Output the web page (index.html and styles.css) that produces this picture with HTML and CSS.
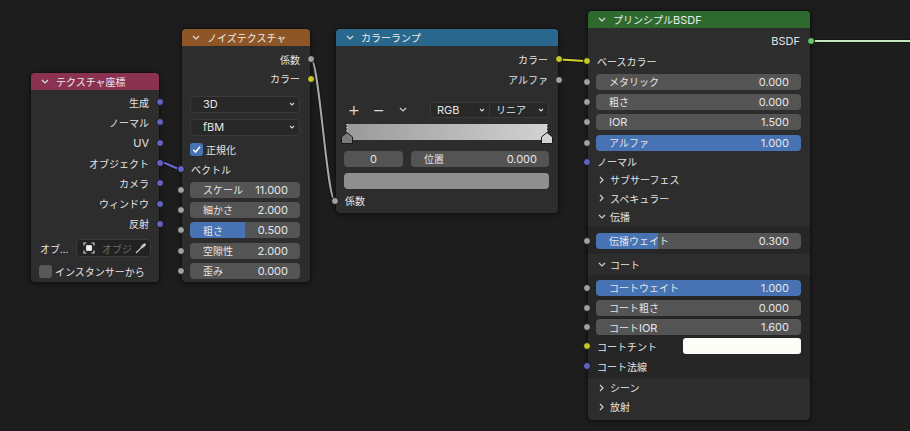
FILE: index.html
```html
<!DOCTYPE html>
<html lang="ja">
<head>
  <meta charset="UTF-8" />
  <title>シェーダーエディター</title>
  <link rel="stylesheet" href="styles.css">
</head>
<body>
  <div class="canvas">
    <!-- ワイヤー（ノードの下に描く） -->
    <svg class="wires" width="910" height="431" viewBox="0 0 910 431">
      <g class="wire-outline">
        <path d="M160 162 C167 162 174 169 181 169" />
        <path d="M311 59 C319 59 327 201 335 201" />
        <path d="M558 59.5 C570 59.5 575 61 587 61" />
        <path d="M811 41 L910 41" />
      </g>
      <path class="wire w-vector" d="M160 162 C167 162 174 169 181 169" />
      <path class="wire w-float" d="M311 59 C319 59 327 201 335 201" />
      <path class="wire w-color" d="M558 59.5 C570 59.5 575 61 587 61" />
      <path class="wire w-shader" d="M811 41 L910 41" />
    </svg>

    <!-- テクスチャ座標 -->
    <div class="node node-texcoord">
      <div class="node-header header-input">
        <svg class="chev" viewBox="0 0 8 5"><path d="M1 1 L4 4 L7 1" /></svg>
        テクスチャ座標
      </div>
      <div class="node-body">
        <div class="row out">生成<span class="socket vector"></span></div>
        <div class="row out">ノーマル<span class="socket vector"></span></div>
        <div class="row out"><span class="lat">UV</span><span class="socket vector"></span></div>
        <div class="row out">オブジェクト<span class="socket vector"></span></div>
        <div class="row out">カメラ<span class="socket vector"></span></div>
        <div class="row out">ウィンドウ<span class="socket vector"></span></div>
        <div class="row out">反射<span class="socket vector"></span></div>
        <div class="row obj-row">
          <span class="obj-label">オブ...</span>
          <div class="obj-field">
            <svg class="obj-icon" viewBox="0 0 12 12">
              <path d="M1 3.5 V1 H3.5 M8.5 1 H11 V3.5 M11 8.5 V11 H8.5 M3.5 11 H1 V8.5" />
              <rect x="3.5" y="3.5" width="5" height="5" rx="0.5" />
            </svg>
            <span class="placeholder">オブジ</span>
            <svg class="pipette" viewBox="0 0 12 12">
              <path d="M7.2 2.6 L9.4 0.8 Q10.8 -0.2 11.6 0.8 Q12.4 1.8 11.2 3 L9.4 4.8 Z" />
              <path class="pipe-line" d="M7.6 4.4 L2.2 9.8 L1.2 11 M6.4 3.2 L8.8 5.6" />
            </svg>
          </div>
        </div>
        <div class="row check-row">
          <span class="checkbox"></span>インスタンサーから
        </div>
      </div>
    </div>

    <!-- ノイズテクスチャ -->
    <div class="node node-noise">
      <div class="node-header header-texture">
        <svg class="chev" viewBox="0 0 8 5"><path d="M1 1 L4 4 L7 1" /></svg>
        ノイズテクスチャ
      </div>
      <div class="node-body">
        <div class="row out first">係数<span class="socket float"></span></div>
        <div class="row out second">カラー<span class="socket color"></span></div>
        <div class="select sel-a"><span class="lat">3D</span><svg class="mini-chev" viewBox="0 0 6 4"><path d="M1 1 L3 3 L5 1" /></svg></div>
        <div class="select sel-b"><span class="lat">fBM</span><svg class="mini-chev" viewBox="0 0 6 4"><path d="M1 1 L3 3 L5 1" /></svg></div>
        <div class="row check-row checked-row">
          <span class="checkbox checked"><svg viewBox="0 0 12 12"><path d="M2.5 6.2 L5 8.8 L9.8 3" /></svg></span>正規化
        </div>
        <div class="row in">ベクトル<span class="socket vector"></span></div>
        <div class="fields">
          <div class="row in field-row"><span class="socket float"></span><div class="field"><span>スケール</span><span class="num">11.000</span></div></div>
          <div class="row in field-row"><span class="socket float"></span><div class="field"><span>細かさ</span><span class="num">2.000</span></div></div>
          <div class="row in field-row"><span class="socket float"></span><div class="field factor" style="--fill: 50%"><span>粗さ</span><span class="num">0.500</span></div></div>
          <div class="row in field-row"><span class="socket float"></span><div class="field"><span>空隙性</span><span class="num">2.000</span></div></div>
          <div class="row in field-row"><span class="socket float"></span><div class="field"><span>歪み</span><span class="num">0.000</span></div></div>
        </div>
      </div>
    </div>

    <!-- カラーランプ -->
    <div class="node node-ramp">
      <div class="node-header header-converter">
        <svg class="chev" viewBox="0 0 8 5"><path d="M1 1 L4 4 L7 1" /></svg>
        カラーランプ
      </div>
      <div class="node-body">
        <div class="row out first">カラー<span class="socket color"></span></div>
        <div class="row out alpha">アルファ<span class="socket float"></span></div>
        <div class="ramp-tools">
          <span class="tool">+</span>
          <span class="tool">−</span>
          <svg class="tool-chev" viewBox="0 0 8 5"><path d="M1 1 L4 4 L7 1" /></svg>
          <div class="seg">
            <div class="seg-item"><span class="lat">RGB</span><svg class="mini-chev" viewBox="0 0 6 4"><path d="M1 1 L3 3 L5 1" /></svg></div>
            <div class="seg-item">リニア<svg class="mini-chev" viewBox="0 0 6 4"><path d="M1 1 L3 3 L5 1" /></svg></div>
          </div>
        </div>
        <div class="ramp">
          <div class="ramp-bar"></div>
          <svg class="stop stop-left" viewBox="0 0 12 20">
            <path class="stop-dash" d="M6 0 V8" />
            <path class="stop-body" d="M0.5 13 L6 8.5 L11.5 13 V19.5 H0.5 Z" />
          </svg>
          <svg class="stop stop-right" viewBox="0 0 12 20">
            <path class="stop-dash" d="M6 0 V8" />
            <path class="stop-body" d="M0.5 13 L6 8.5 L11.5 13 V19.5 H0.5 Z" />
          </svg>
        </div>
        <div class="ramp-values">
          <div class="field index"><span class="num">0</span></div>
          <div class="field pos"><span>位置</span><span class="num">0.000</span></div>
        </div>
        <div class="swatch-bar"></div>
        <div class="row in last">係数<span class="socket float"></span></div>
      </div>
    </div>

    <!-- プリンシプルBSDF -->
    <div class="node node-bsdf">
      <div class="node-header header-shader">
        <svg class="chev" viewBox="0 0 8 5"><path d="M1 1 L4 4 L7 1" /></svg>
        プリンシプル<span class="lat">BSDF</span>
      </div>
      <div class="node-body">
        <div class="row out first"><span class="lat">BSDF</span><span class="socket shader"></span></div>
        <div class="row in">ベースカラー<span class="socket color"></span></div>
        <div class="fields">
          <div class="row in field-row"><span class="socket float"></span><div class="field"><span>メタリック</span><span class="num">0.000</span></div></div>
          <div class="row in field-row"><span class="socket float"></span><div class="field"><span>粗さ</span><span class="num">0.000</span></div></div>
          <div class="row in field-row"><span class="socket float"></span><div class="field"><span class="lat">IOR</span><span class="num">1.500</span></div></div>
          <div class="row in field-row"><span class="socket float"></span><div class="field factor" style="--fill: 100%"><span>アルファ</span><span class="num">1.000</span></div></div>
        </div>
        <div class="row in normal">ノーマル<span class="socket vector"></span></div>
        <div class="panel-head"><svg class="pchev" viewBox="0 0 5 8"><path d="M1 1 L4 4 L1 7" /></svg>サブサーフェス</div>
        <div class="panel-head"><svg class="pchev" viewBox="0 0 5 8"><path d="M1 1 L4 4 L1 7" /></svg>スペキュラー</div>
        <div class="panel-head"><svg class="pchev open" viewBox="0 0 8 5"><path d="M1 1 L4 4 L7 1" /></svg>伝播</div>
        <div class="panel-content transmission">
          <div class="row in field-row"><span class="socket float"></span><div class="field factor" style="--fill: 30%"><span>伝播ウェイト</span><span class="num">0.300</span></div></div>
        </div>
        <div class="panel-head coat-head"><svg class="pchev open" viewBox="0 0 8 5"><path d="M1 1 L4 4 L7 1" /></svg>コート</div>
        <div class="panel-content coat">
          <div class="row in field-row coat-field"><span class="socket float"></span><div class="field factor" style="--fill: 100%"><span>コートウェイト</span><span class="num">1.000</span></div></div>
          <div class="row in field-row coat-field"><span class="socket float"></span><div class="field"><span>コート粗さ</span><span class="num">0.000</span></div></div>
          <div class="row in field-row coat-field"><span class="socket float"></span><div class="field"><span>コート<span class="lat">IOR</span></span><span class="num">1.600</span></div></div>
          <div class="row in tint">コートチント<span class="socket color"></span><div class="tint-swatch"></div></div>
          <div class="row in coat-normal">コート法線<span class="socket vector"></span></div>
        </div>
        <div class="panel-head closed-a"><svg class="pchev" viewBox="0 0 5 8"><path d="M1 1 L4 4 L1 7" /></svg>シーン</div>
        <div class="panel-head closed-b"><svg class="pchev" viewBox="0 0 5 8"><path d="M1 1 L4 4 L1 7" /></svg>放射</div>
      </div>
    </div>
  </div>
</body>
</html>
```

FILE: styles.css
```css
/* ベース */
* {
  margin: 0;
  padding: 0;
  box-sizing: border-box;
}
html, body {
  width: 910px;
  height: 431px;
  overflow: hidden;
  background: #1d1d1d;
}
body {
  font-family: 'Noto Sans CJK JP', 'DejaVu Sans', sans-serif;
  font-size: 10px;
  color: #e4e4e4;
}
.lat, .num {
  font-family: 'Inter', 'DejaVu Sans', sans-serif;
  font-size: 11px;
}
.canvas {
  position: relative;
  width: 910px;
  height: 431px;
  background: #1d1d1d;
}

/* ワイヤー */
.wires {
  position: absolute;
  left: 0;
  top: 0;
  z-index: 0;
}
.wire-outline path {
  fill: none;
  stroke: #141414;
  stroke-width: 4;
}
.wire {
  fill: none;
  stroke-width: 2;
}
.w-vector { stroke: #6a6ad0; }
.w-float { stroke: #a8a8a8; }
.w-color { stroke: #d2d22e; }
.w-shader { stroke: #c2e8c2; }

/* ノード共通 */
.node {
  position: absolute;
  z-index: 1;
  background: #2d2d2d;
  border: 1px solid #121212;
  border-radius: 5px;
  box-shadow: 0 1px 5px rgba(0, 0, 0, 0.45);
}
.node-texcoord { left: 30px; top: 72px; width: 130px; }
.node-noise { left: 181px; top: 28px; width: 130px; }
.node-ramp { left: 335px; top: 28px; width: 224px; }
.node-bsdf { left: 587px; top: 10px; width: 224px; }

.node-header {
  height: 17px;
  display: flex;
  align-items: center;
  padding-left: 10px;
  border-radius: 4px 4px 0 0;
  color: #ececec;
}
.header-input { background: #8c3251; }
.header-texture { background: #8e5627; }
.header-converter { background: #29688c; }
.header-shader { background: #2e6a2e; }
.chev {
  width: 8px;
  height: 5px;
  margin-right: 7px;
  fill: none;
  stroke: #dedede;
  stroke-width: 1.2;
}

.node-body {
  display: flex;
  flex-direction: column;
}
.row {
  position: relative;
  height: 20px;
  display: flex;
  align-items: center;
  padding: 0 9px;
  white-space: nowrap;
}
.row.out {
  justify-content: flex-end;
  padding-right: 10px;
}

/* ソケット */
.socket {
  position: absolute;
  top: 50%;
  width: 8px;
  height: 8px;
  margin-top: -4px;
  border-radius: 50%;
  border: 1px solid #161616;
  z-index: 2;
}
.out .socket { right: -5px; }
.in .socket { left: -5px; }
.socket.vector { background: #6363c7; }
.socket.float { background: #a1a1a1; }
.socket.color { background: #c7c729; }
.socket.shader { background: #63c763; }

/* 数値フィールド */
.field-row {
  padding: 0 9px 0 8px;
}
.field {
  flex: 1;
  height: 16px;
  display: flex;
  align-items: center;
  justify-content: space-between;
  padding: 0 12px 0 13px;
  background: #545454;
  border-radius: 4px;
  color: #e6e6e6;
}
.field.factor {
  background: linear-gradient(90deg, #4772b3 var(--fill), #545454 var(--fill));
}

/* テクスチャ座標 */
.node-texcoord .node-body { padding: 2px 0 1px; }
.node-texcoord .out { height: 20.3px; }
.obj-row {
  margin-top: 4px;
  padding: 0 8px 0 9px;
}
.obj-label { width: 36px; }
.obj-field {
  flex: 1;
  height: 18px;
  display: flex;
  align-items: center;
  padding: 0 4px 0 6px;
  background: #222222;
  border: 1px solid #3b3b3b;
  border-radius: 4px;
}
.obj-icon {
  width: 12px;
  height: 12px;
  fill: #f2f2f2;
  stroke: #cfcfcf;
  stroke-width: 1.2;
}
.obj-icon path { fill: none; }
.placeholder {
  margin-left: 7px;
  color: #6e6e6e;
  flex: 1;
}
.pipette {
  width: 11px;
  height: 11px;
  fill: #cfcfcf;
}
.pipe-line {
  fill: none;
  stroke: #cfcfcf;
  stroke-width: 1.3;
}
.check-row {
  margin-top: 3px;
  padding-left: 8px;
}
.checkbox {
  width: 13px;
  height: 13px;
  margin-right: 3px;
  border-radius: 3px;
  background: #595959;
  display: flex;
  align-items: center;
  justify-content: center;
}
.checkbox.checked { background: #4772b3; }
.checkbox svg {
  width: 11px;
  height: 11px;
  fill: none;
  stroke: #fff;
  stroke-width: 1.7;
}

/* ノイズテクスチャ */
.node-noise .node-body { padding: 3px 0 1px; }
.row.second { height: 19px; }
.select {
  height: 17.5px;
  margin: 0 10px 0 8px;
  display: flex;
  align-items: center;
  justify-content: space-between;
  padding: 0 4px 0 12px;
  background: #282828;
  border: 1px solid #3a3a3a;
  border-radius: 4px;
}
.sel-a { margin-top: 7.5px; }
.sel-b { margin-top: 5.5px; }
.mini-chev {
  width: 6px;
  height: 4px;
  fill: none;
  stroke: #d6d6d6;
  stroke-width: 1.1;
}
.checked-row { padding-left: 8px; }
.node-noise .fields { margin-top: 0.5px; }
.node-noise .field-row { height: 20.3px; padding-right: 10px; }

/* カラーランプ */
.node-ramp .node-body { padding: 3px 0 2px; }
.row.alpha { height: 21px; }
.ramp-tools {
  height: 16.5px;
  margin-top: 11.5px;
  display: flex;
  align-items: center;
  padding: 0 9px 0 12px;
}
.tool {
  font-family: 'DejaVu Sans', sans-serif;
  font-size: 14px;
  width: 25px;
  color: #dcdcdc;
}
.tool-chev {
  width: 8px;
  height: 5px;
  margin-left: 1px;
  fill: none;
  stroke: #cfcfcf;
  stroke-width: 1.2;
}
.seg {
  margin-left: auto;
  width: 119px;
  height: 16.5px;
  display: flex;
  background: #282828;
  border: 1px solid #3a3a3a;
  border-radius: 4px;
}
.seg-item {
  flex: 1;
  display: flex;
  align-items: center;
  justify-content: space-between;
  padding: 0 4px 0 6px;
}
.seg-item + .seg-item { border-left: 1px solid #3a3a3a; }
.ramp {
  position: relative;
  height: 20px;
  margin: 6px 11px 0 11px;
}
.ramp-bar {
  height: 16px;
  background: linear-gradient(90deg, #9a9a9a, #d2d2d2);
}
.stop {
  position: absolute;
  top: 0;
  width: 12px;
  height: 20px;
}
.stop-left { left: -6px; }
.stop-right { right: -6px; }
.stop-dash {
  stroke: #f0f0f0;
  stroke-width: 1;
  stroke-dasharray: 1.5 1.5;
}
.stop-body { stroke: #1a1a1a; stroke-width: 1; }
.stop-left .stop-body { fill: #7a7a7a; }
.stop-right .stop-body { fill: #d4d4d4; }
.ramp-values {
  height: 16.7px;
  margin: 6.5px 9px 0 8px;
  display: flex;
  gap: 8px;
}
.ramp-values .field { height: 16.7px; }
.field.index {
  flex: 0 0 59px;
  justify-content: center;
  padding: 0;
}
.swatch-bar {
  height: 16px;
  margin: 5.8px 9px 0 8px;
  background: #8f8f8f;
  border-radius: 4px;
}
.row.last { margin-top: 2px; }

/* プリンシプルBSDF */
.node-bsdf .node-body { padding: 3px 0 4px; }
.node-bsdf .fields { margin-top: 0.5px; }
.node-bsdf .fields .field-row { height: 20.3px; }
.row.normal { height: 18px; }
.panel-head {
  height: 18.5px;
  display: flex;
  align-items: center;
  padding-left: 11px;
  white-space: nowrap;
}
.pchev {
  width: 5px;
  height: 8px;
  margin-right: 6px;
  fill: none;
  stroke: #d0d0d0;
  stroke-width: 1.2;
}
.pchev.open {
  width: 8px;
  height: 5px;
  margin-left: -1px;
  margin-right: 4px;
}
.panel-content {
  background: #262626;
}
.transmission { padding: 4.5px 0 3.3px; }
.coat-head { height: 21px; }
.coat { padding: 3px 0 1px; }
.coat-field { height: 19.7px; }
.row.tint { height: 18px; padding-right: 9px; }
.tint-swatch {
  margin-left: auto;
  width: 118px;
  height: 16px;
  background: #fdfdf8;
  border-radius: 3px;
}
.row.coat-normal { height: 22px; }
.closed-a { height: 19.5px; }
.closed-b { height: 18.5px; }
```
